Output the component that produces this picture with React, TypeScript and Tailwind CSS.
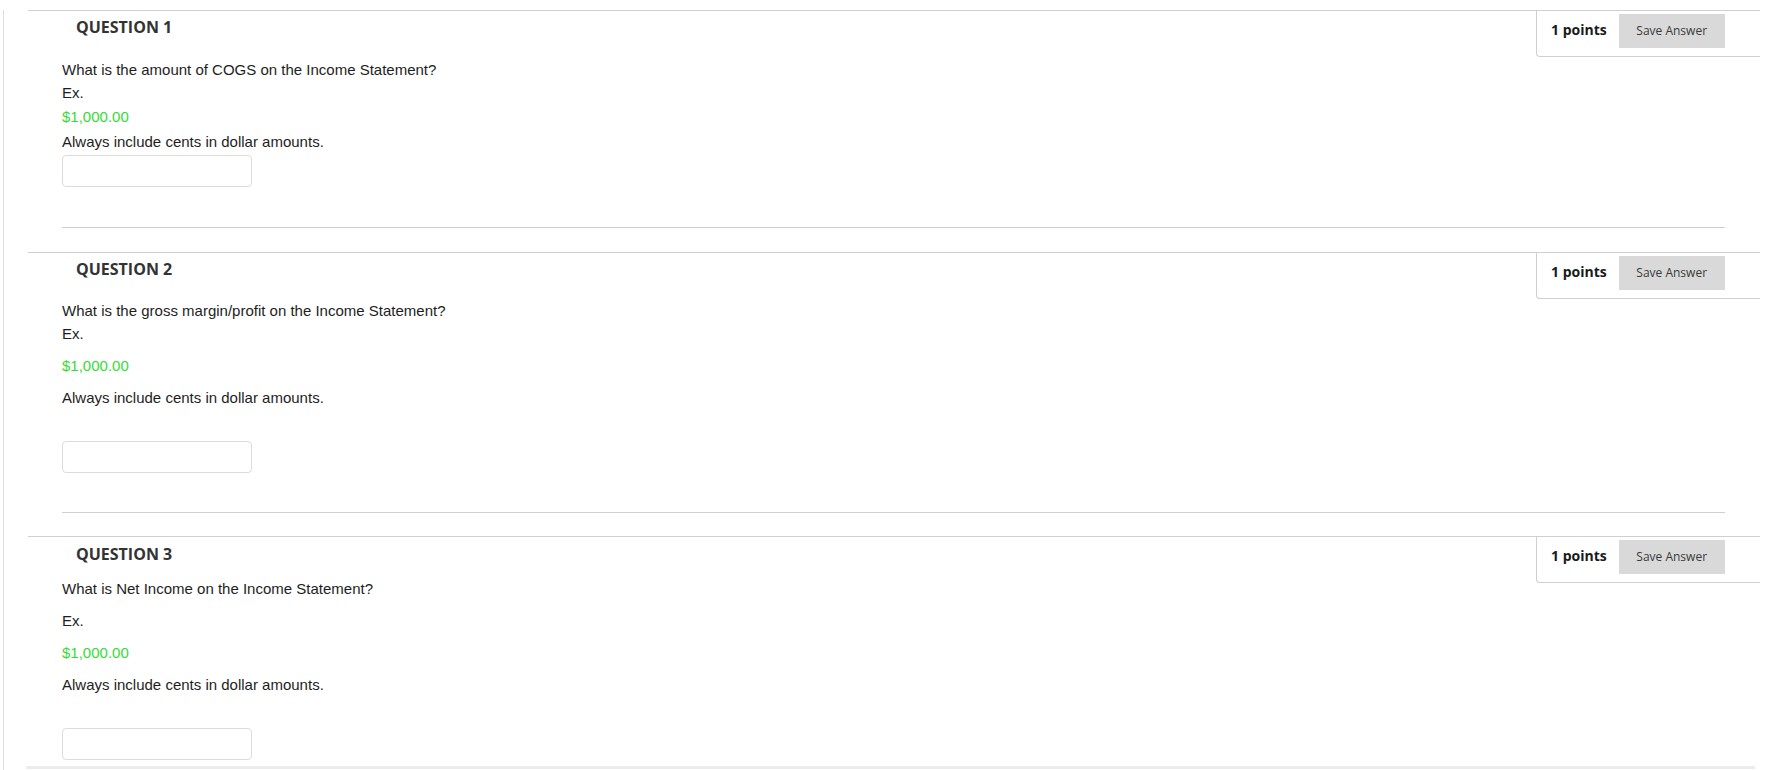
import React from 'react'

type Q = {
  n: number
  text: string
  headPt: string
  gaps: [string, string, string, string, string, string]
  after: string
  last?: boolean
}

const questions: Q[] = [
  {
    n: 1,
    text: 'What is the amount of COGS on the Income Statement?',
    headPt: 'pt-0',
    gaps: ['mt-[17px]', 'mt-[3px]', 'mt-[4px]', 'mt-[5px]', 'mt-[3px]', 'mt-[40px]'],
    after: 'mb-[24px]',
  },
  {
    n: 2,
    text: 'What is the gross margin/profit on the Income Statement?',
    headPt: 'pt-0',
    gaps: ['mt-[16px]', 'mt-[3px]', 'mt-[12px]', 'mt-[12px]', 'mt-[33px]', 'mt-[39px]'],
    after: 'mb-[23px]',
  },
  {
    n: 3,
    text: 'What is Net Income on the Income Statement?',
    headPt: 'pt-[1px]',
    gaps: ['mt-[10px]', 'mt-[12px]', 'mt-[12px]', 'mt-[12px]', 'mt-[33px]', 'mt-[6px]'],
    after: '',
    last: true,
  },
]

function PointsBox() {
  return (
    <div className="w-[224px] h-[46px] shrink-0 border-l border-b border-[#cfcfcf] rounded-bl-[4px] flex items-start pl-[14px] pt-[3px] gap-[12px]">
      <span className="leading-[32px] text-[14px] font-bold text-[#1a1a1a] font-['Open_Sans',sans-serif] whitespace-nowrap">
        1 points
      </span>
      <button className="w-[106px] h-[34px] bg-[#d9d9d9] text-[12px] text-[#3a3a3a] font-['Open_Sans',sans-serif] whitespace-nowrap">
        Save Answer
      </button>
    </div>
  )
}

function Question({ q }: { q: Q }) {
  const [g1, g2, g3, g4, g5, g6] = q.gaps
  return (
    <section className={`ml-[24px] w-[1732px] border-t border-[#cfcfcf] flex items-start ${q.after}`}>
      <div className="flex-1 min-w-0">
        <h2 className={`pl-[48px] h-[32px] leading-[32px] text-[16px] font-bold text-[#333] font-['Open_Sans',sans-serif] ${q.headPt}`}>
          QUESTION {q.n}
        </h2>
        <div className="pl-[34px] text-[15px] leading-[20px] text-[#1e1e1e] font-['Liberation_Sans',Arial,sans-serif]">
          <p className={g1}>{q.text}</p>
          <p className={g2}>Ex.</p>
          <p className={`${g3} text-[#33dd33]`}>$1,000.00</p>
          <p className={g4}>Always include cents in dollar amounts.</p>
          <input
            type="text"
            className={`${g5} block w-[190px] h-[32px] border border-[#dcdcdc] rounded-[4px] bg-white`}
          />
        </div>
        {q.last ? (
          <div className={`${g6} -ml-[2px] w-[1729px] h-[3px] bg-[#ececec]`} />
        ) : (
          <div className={`${g6} ml-[34px] w-[1663px] h-px bg-[#cfcfcf]`} />
        )}
      </div>
      <PointsBox />
    </section>
  )
}

export default function App() {
  return (
    <div className="min-h-screen bg-white pt-[10px]">
      <div className="ml-[3px] border-l border-[#dedede] min-h-[760px] flex flex-col">
        {questions.map(q => (
          <Question key={q.n} q={q} />
        ))}
      </div>
    </div>
  )
}
